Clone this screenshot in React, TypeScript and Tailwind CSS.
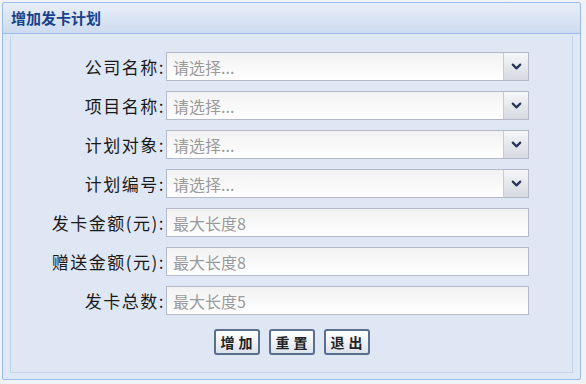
import { ChevronDown } from "lucide-react";

const font = { fontFamily: '"Microsoft YaHei", "Noto Sans CJK SC", sans-serif' };

const rows = [
  { label: "公司名称:", hint: "请选择...", select: true },
  { label: "项目名称:", hint: "请选择...", select: true },
  { label: "计划对象:", hint: "请选择...", select: true },
  { label: "计划编号:", hint: "请选择...", select: true },
  { label: "发卡金额(元):", hint: "最大长度8", select: false },
  { label: "赠送金额(元):", hint: "最大长度8", select: false },
  { label: "发卡总数:", hint: "最大长度5", select: false },
];

function Field({ label, hint, select }: { label: string; hint: string; select: boolean }) {
  return (
    <div className="flex items-center h-[39px]">
      <div className="w-[155px] pr-[1px] text-right text-[17px] text-[#1a1a1a] tracking-[1.5px]">{label}</div>
      <div className="flex h-[29px] w-[363px] border border-[#b5b8c8] bg-white">
        <div className="flex-1 flex items-center pl-[6px] text-[16px] text-[#9a9a9a] bg-gradient-to-b from-[#f2f2f2] to-white">
          {hint}
        </div>
        {select && (
          <div className="w-[25px] flex items-center justify-center border-l border-[#c8cad4] bg-gradient-to-b from-[#f6f7f9] to-[#d6d9e0]">
            <ChevronDown size={15} strokeWidth={3.5} className="text-[#27355a]" />
          </div>
        )}
      </div>
    </div>
  );
}

function Btn({ text }: { text: string }) {
  return (
    <button className="h-[26px] rounded-[3px] border-2 border-[#5a6f8e] bg-gradient-to-b from-white to-[#dde3ec] text-[14px] font-bold text-[#222] tracking-[4px] pl-[5px] pr-[1px]">
      {text}
    </button>
  );
}

export default function App() {
  return (
    <div className="w-[586px] h-[384px] bg-[#f0f2f6] p-[2px]" style={font}>
      <div className="h-[378px] w-[579px] border border-[#99bbe8] bg-[#dfe8f6] flex flex-col rounded-[2px]">
        <div className="h-[31px] flex items-center pl-[8px] border-b border-[#99bbe8] bg-gradient-to-b from-[#e7eef8] to-[#cedbef]">
          <span className="text-[15px] font-bold text-[#15428b]">增加发卡计划</span>
        </div>
        <div className="flex-1 mx-[7px] mb-[6px] mt-[2px] border-x border-b border-[#c5d3e8] bg-[#dfe7f5] flex flex-col pt-[11px]">
          {rows.map((r) => (
            <Field key={r.label} {...r} />
          ))}
          <div className="flex justify-center gap-[9px] mt-[9px]">
            <Btn text="增加" />
            <Btn text="重置" />
            <Btn text="退出" />
          </div>
        </div>
      </div>
    </div>
  );
}
